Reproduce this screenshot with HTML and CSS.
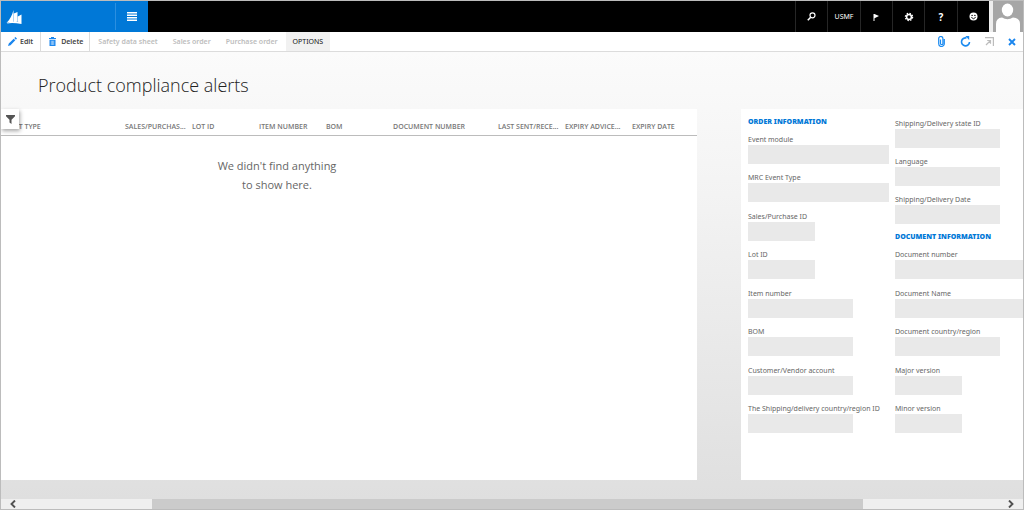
FILE: index.html
```html
<!DOCTYPE html>
<html lang="en">
<head>
<meta charset="utf-8">
<meta name="viewport" content="width=device-width, initial-scale=1">
<title>Product compliance alerts</title>
<link rel="stylesheet" href="styles.css">
</head>
<body>
<div class="app">
  <header class="navbar">
    <div class="brand">
      <a class="brand-home" href="#" aria-label="Home">
        <svg width="17" height="16" viewBox="0 0 17 16" fill="#fff"><path d="M.5 14Q5.500 9 7.500 1V13Q4 12.500 .5 14zM7.800 13V4.500L11.500 3V12.500zM11.800 12.500V7.500L15.500 5.500V14zM.5 14.500Q7 11 15.500 13.500V15Q7 13.500 .5 14.500z"/></svg>
      </a>
      <button class="brand-menu" aria-label="Menu">
        <svg width="10" height="9" viewBox="0 0 10 9" fill="#fff"><path d="M0 0h10v1.400H0zM0 2.500h10v1.400H0zM0 5h10v1.400H0zM0 7.500h10v1.400H0z"/></svg>
      </button>
    </div>
    <nav class="nav-tools">
      <button class="nav-button" aria-label="Search"><svg width="9" height="9" viewBox="0 0 9 9" fill="none" stroke="#fff"><circle cx="5.500" cy="3.300" r="2.500" stroke-width="1.200"/><path d="M3.700 5.200L.8 8.200" stroke-width="1.600"/></svg></button>
      <button class="nav-button">USMF</button>
      <button class="nav-button" aria-label="Messages"><svg width="8" height="8" viewBox="0 0 8 8" fill="#fff"><path d="M1.500 1h1v7h-1zM2.500 1L7 3 2.500 5.200z"/></svg></button>
      <button class="nav-button" aria-label="Settings"><svg width="10" height="10" viewBox="0 0 10 10" fill="none" stroke="#fff"><circle cx="5" cy="5" r="3.600" stroke-width="1.300" stroke-dasharray="1.500 1.327"/><circle cx="5" cy="5" r="2.400" stroke-width="1.500"/></svg></button>
      <button class="nav-button nav-help" aria-label="Help">?</button>
      <button class="nav-button" aria-label="Feedback"><svg width="9" height="9" viewBox="0 0 9 9"><circle cx="4.500" cy="4.500" r="4" fill="#fff"/><g fill="#000"><circle cx="3.100" cy="3.400" r=".7"/><circle cx="5.900" cy="3.400" r=".7"/></g><path d="M2.300 5.300Q4.500 8.200 6.700 5.300" fill="none" stroke="#000" stroke-width=".9"/></svg></button>
      <button class="avatar" aria-label="User account"><svg width="30" height="31" viewBox="0 0 30 31"><path fill="#a6a6a6" d="M0 0h30v31H0z"/><ellipse cx="14.500" cy="9" rx="5.700" ry="6.500" fill="#fff"/><path fill="#fff" d="M3 31V23Q3 17 9 16.500Q14.500 20 20 16.500Q27 17 27 23V31z"/></svg></button>
    </nav>
  </header>

  <div class="toolbar">
    <button class="tool tool-edit"><svg width="9" height="9" viewBox="0 0 9 9" fill="#1a86ee"><path d="M0 9L.8 6.500 5.700 1.700 7.300 3.300 2.500 8.200zM6.300 1.100L7.400 0 9 1.600 7.900 2.700z"/></svg>Edit</button>
    <button class="tool tool-delete"><svg width="7" height="9" viewBox="0 0 7 9"><path fill="#1a86ee" d="M0 1h2V0h3v1h2v1H0zM.5 2.700h6V9h-6z"/><path stroke="#fff" stroke-width=".5" d="M2.300 3.700v4.300M3.500 3.700v4.300M4.700 3.700v4.300"/></svg>Delete</button>
    <button class="tool" disabled>Safety data sheet</button>
    <button class="tool" disabled>Sales order</button>
    <button class="tool" disabled>Purchase order</button>
    <button class="tool tool-options">OPTIONS</button>
    <div class="page-actions">
      <button class="action" aria-label="Attachments"><svg width="7" height="11" viewBox="0 0 7 11" fill="none" stroke="#1a8af0" stroke-width="1.200"><path d="M6.300 3v4.700a2.800 2.800 0 0 1-5.600 0V2.600a2 2 0 0 1 4.200 0V7.400a1.200 1.200 0 0 1-2.400 0V3.500"/></svg></button>
      <button class="action" aria-label="Refresh"><svg width="11" height="11" viewBox="0 0 11 11"><path d="M6.500 2A4 4 0 1 0 9.500 6" fill="none" stroke="#1a8af0" stroke-width="1.600"/><path fill="#1a8af0" d="M5.300 0h3.900v3.900z"/></svg></button>
      <button class="action" aria-label="Open in new window" disabled><svg width="9" height="9" viewBox="0 0 9 9" fill="none" stroke="#bcbcbc" stroke-width="1.200"><path d="M0 .6h8.400V9M1 8l4-4M2.200 3.500h3.300v3.300"/></svg></button>
      <button class="action action-close" aria-label="Close"><svg width="8" height="8" viewBox="0 0 8 8" stroke="#1a86ee" stroke-width="1.900"><path d="M1 1l6 6M7 1L1 7"/></svg></button>
    </div>
  </div>

  <main class="stage">
    <h1 class="page-title">Product compliance alerts</h1>
    <div class="panels">
      <section class="list-panel">
        <table class="grid">
          <colgroup><col class="col-event"><col class="col-short"><col class="col-short"><col class="col-short"><col class="col-short"><col class="col-document"><col class="col-short"><col class="col-short"><col></colgroup>
          <thead><tr>
            <th scope="col">EVENT TYPE</th><th scope="col">SALES/PURCHAS...</th><th scope="col">LOT ID</th><th scope="col">ITEM NUMBER</th><th scope="col">BOM</th><th scope="col">DOCUMENT NUMBER</th><th scope="col">LAST SENT/RECE...</th><th scope="col">EXPIRY ADVICE...</th><th scope="col">EXPIRY DATE</th>
          </tr></thead>
        </table>
        <p class="empty">We didn't find anything<br>to show here.</p>
        <button class="filter" aria-label="Show filters"><svg width="9" height="9" viewBox="0 0 9 9" fill="#555"><path d="M0 0h9v1.200L5.500 4.800V9L3.500 7.500V4.800L0 1.200z"/></svg></button>
      </section>

      <section class="details-panel">
        <div class="column">
          <h2 class="group-title">ORDER INFORMATION</h2>
          <div class="fields fields-fill">
            <div class="field"><label for="module">Event module</label><input id="module" class="wide" readonly></div>
            <div class="field"><label for="event">MRC Event Type</label><input id="event" class="wide" readonly></div>
            <div class="field"><label for="sales">Sales/Purchase ID</label><input id="sales" class="narrow" readonly></div>
            <div class="field"><label for="lot">Lot ID</label><input id="lot" class="narrow" readonly></div>
            <div class="field"><label for="item">Item number</label><input id="item" readonly></div>
            <div class="field"><label for="bom">BOM</label><input id="bom" readonly></div>
            <div class="field"><label for="account">Customer/Vendor account</label><input id="account" readonly></div>
            <div class="field"><label for="region">The Shipping/delivery country/region ID</label><input id="region" readonly></div>
          </div>
        </div>
        <div class="column">
          <div class="fields">
            <div class="field"><label for="state">Shipping/Delivery state ID</label><input id="state" readonly></div>
            <div class="field"><label for="language">Language</label><input id="language" readonly></div>
            <div class="field"><label for="date">Shipping/Delivery Date</label><input id="date" readonly></div>
          </div>
          <h2 class="group-title">DOCUMENT INFORMATION</h2>
          <div class="fields fields-fill">
            <div class="field"><label for="docnumber">Document number</label><input id="docnumber" class="wide" readonly></div>
            <div class="field"><label for="docname">Document Name</label><input id="docname" class="wide" readonly></div>
            <div class="field"><label for="doccountry">Document country/region</label><input id="doccountry" readonly></div>
            <div class="field"><label for="major">Major version</label><input id="major" class="narrow" readonly></div>
            <div class="field"><label for="minor">Minor version</label><input id="minor" class="narrow" readonly></div>
          </div>
        </div>
      </section>
    </div>
  </main>

  <div class="scrollbar">
    <button class="scroll-arrow" aria-label="Scroll left"><svg width="6" height="8" viewBox="0 0 6 8" fill="none" stroke="#505050" stroke-width="1.900"><path d="M5 .5L1.500 4 5 7.500"/></svg></button>
    <div class="scroll-track"><div class="scroll-thumb"></div></div>
    <button class="scroll-arrow" aria-label="Scroll right"><svg width="6" height="8" viewBox="0 0 6 8" fill="none" stroke="#505050" stroke-width="1.900"><path d="M1 .5L4.500 4 1 7.500"/></svg></button>
  </div>
</div>
</body>
</html>
```
FILE: styles.css
```css
* { box-sizing: border-box; }

body {
  margin: 0;
  font-family: "Noto Sans", "Open Sans", sans-serif;
  font-size: 7px;
  color: #666;
}

button {
  display: flex;
  align-items: center;
  justify-content: center;
  margin: 0;
  padding: 0;
  border: 0;
  background: none;
  color: inherit;
  font: inherit;
}

svg { display: block; flex: none; }

.app {
  display: flex;
  flex-direction: column;
  min-height: 100vh;
  overflow: hidden;
  border: 1px solid #bcbcbc;
}

.navbar {
  display: flex;
  justify-content: space-between;
  height: 31px;
  background: #000;
}

.brand { display: flex; width: 147px; background: #0078d7; }
.brand-home { display: flex; align-items: center; flex: 1; padding-left: 5px; }
.brand-menu { width: 33px; margin: 2px 0; border-left: 1px solid #2b8fe0; }

.nav-tools { display: flex; width: 228px; color: #fff; }
.nav-button { flex: 1; border-left: 1px solid #262626; }
.nav-help { font-size: 10px; font-weight: 700; }
.avatar { border-left: 4px solid #eee; }

.toolbar {
  display: flex;
  gap: 1px;
  height: 20px;
  border-bottom: 1px solid #dcdcdc;
  background: #fff;
}

.tool {
  gap: 4px;
  padding: 0 7px;
  color: #444;
  font-weight: 600;
}
.tool:disabled { color: #bdbdbd; }
.tool-edit { gap: 3px; padding-right: 6px; }
.tool-delete {
  gap: 5px;
  padding: 0 6px 0 8px;
  border: solid #dcdcdc;
  border-width: 0 1px;
}
.tool-options { background: #f1f1f1; color: #111; font-weight: 400; }

.page-actions { display: flex; margin-left: auto; }
.action { width: 24px; }
.action-close { width: 22px; }

.stage {
  display: flex;
  flex: 1;
  flex-direction: column;
  padding-bottom: 19px;
  background: linear-gradient(#fbfbfb, #f5f5f5 25%, #dfdfdf);
}

.page-title {
  margin: 0;
  padding: 20px 37px 11px;
  color: #222;
  font-family: "Open Sans", "Noto Sans", sans-serif;
  font-size: 18px;
  font-weight: 300;
  line-height: 26px;
}

.panels { display: flex; flex: 1; gap: 44px; }
.list-panel { position: relative; flex: 1; min-width: 0; background: #fff; }

.grid {
  width: 100%;
  border-collapse: collapse;
  border-bottom: 1px solid #bcbcbc;
  table-layout: fixed;
}
.grid th {
  height: 26px;
  padding: 10px 0 0;
  color: #777;
  font-family: "Open Sans", "Noto Sans", sans-serif;
  font-weight: 600;
  text-align: left;
  white-space: nowrap;
}
.col-event { width: 124px; }
.col-short { width: 67px; }
.col-document { width: 105px; }

.empty {
  margin: 20px 0 0;
  padding-right: 144px;
  font-family: "Open Sans", "Noto Sans", sans-serif;
  font-size: 11px;
  line-height: 19px;
  text-align: center;
}

.filter {
  position: absolute;
  top: 0;
  left: 0;
  width: 18px;
  height: 20px;
  background: #fff;
  box-shadow: 1px 2px 4px rgba(0, 0, 0, .35);
}

.details-panel {
  display: flex;
  flex: none;
  gap: 6px;
  width: 282px;
  padding: 7px 0 47px 7px;
  overflow: hidden;
  background: #fff;
}
.column { display: flex; flex: none; flex-direction: column; width: 141px; }

.group-title {
  margin: 0;
  padding-bottom: 7px;
  color: #0078d7;
  font-size: 7px;
  font-weight: 900;
  line-height: 11px;
  white-space: nowrap;
}

.fields { display: flex; flex-direction: column; gap: 8px; }
.fields + .group-title { padding-top: 7px; }
.column > .fields:first-child { padding-top: 2px; }
.fields-fill { flex: 1; justify-content: space-between; }

.field label { display: block; line-height: 11px; white-space: nowrap; }
.field input {
  display: block;
  width: 105px;
  height: 19px;
  margin: 0;
  padding: 0 4px;
  border: 0;
  background: #e9e9e9;
  font: inherit;
}
.field .wide { width: 141px; }
.field .narrow { width: 67px; }

.scrollbar { display: flex; height: 10px; background: #efefef; }
.scroll-arrow { width: 24px; }
.scroll-track { display: flex; flex: 1; }
.scroll-thumb { width: 73%; height: 100%; margin-left: 13%; background: #cbcbcb; }
```
